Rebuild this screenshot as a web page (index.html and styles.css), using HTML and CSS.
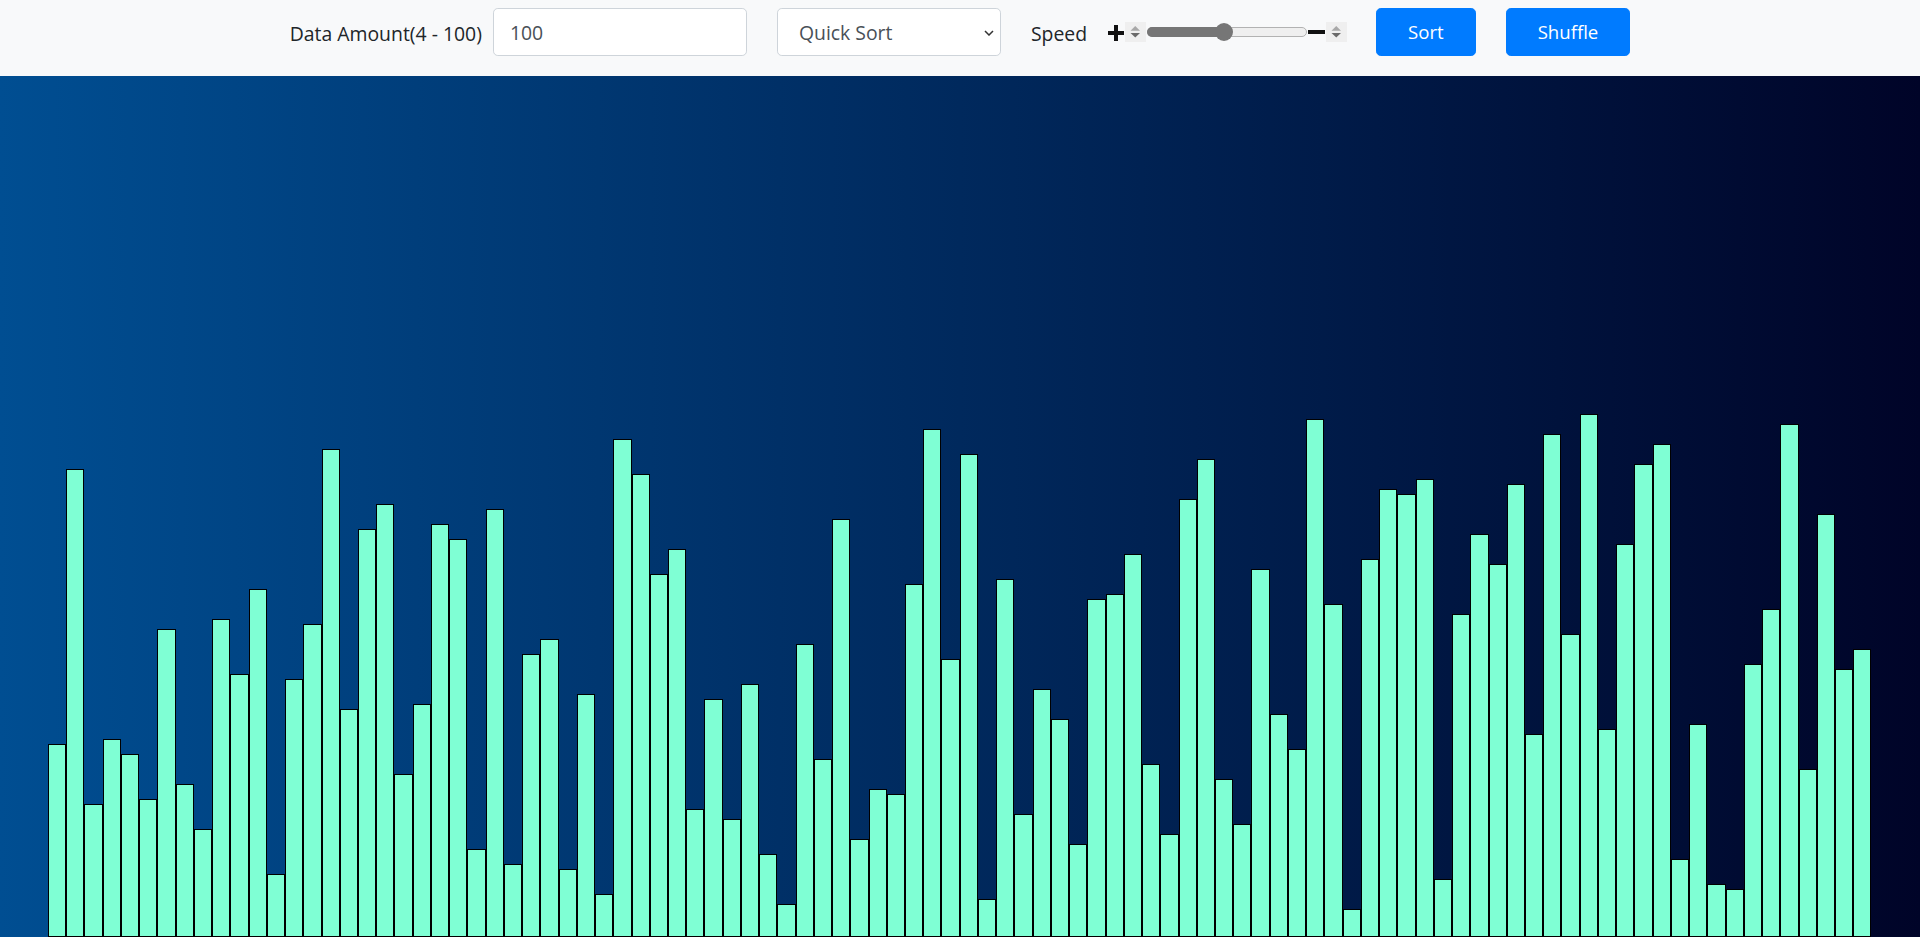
FILE: index.html
```html
<!DOCTYPE html>
<html lang="en">
<head>
<meta charset="utf-8">
<title>Sorting Visualizer</title>
<link rel="stylesheet" href="styles.css">
</head>
<body>
<nav class="toolbar">
  <label class="field-label amount-label" for="amount">Data Amount(4 - 100)</label>
  <input id="amount" class="amount-input" type="text" value="100">
  <div class="select-wrap">
    <select class="algo-select">
      <option>Quick Sort</option>
      <option>Merge Sort</option>
      <option>Heap Sort</option>
      <option>Bubble Sort</option>
    </select>
    <svg class="chevron" width="10" height="6" viewBox="0 0 10 6"><path d="M1 1 L5 5 L9 1" fill="none" stroke="#333" stroke-width="1.5"/></svg>
  </div>
  <span class="field-label speed-label">Speed</span>
  <div class="speed">
    <svg class="plus" width="16" height="16" viewBox="0 0 16 16"><rect x="0" y="6" width="16" height="4" fill="#111"/><rect x="6" y="0" width="4" height="16" fill="#111"/></svg>
    <span class="spinner"><svg width="21" height="20" viewBox="0 0 21 20"><path d="M5.5 8.7 L10.25 4 L15 8.7 Z" fill="#a8a8a8"/><path d="M5.5 11 L15 11 L10.25 15.5 Z" fill="#6a6a6a"/></svg></span>
    <div class="track"><div class="track-fill"></div><div class="thumb"></div></div>
    <svg class="minus" width="17" height="4" viewBox="0 0 17 4"><rect x="0" y="0" width="17" height="4" fill="#111"/></svg>
    <span class="spinner"><svg width="21" height="20" viewBox="0 0 21 20"><path d="M5.5 8.7 L10.25 4 L15 8.7 Z" fill="#a8a8a8"/><path d="M5.5 11 L15 11 L10.25 15.5 Z" fill="#6a6a6a"/></svg></span>
  </div>
  <button class="btn">Sort</button>
  <button class="btn">Shuffle</button>
</nav>
<main class="stage">
  <div class="bars">
    <div class="bar" style="height:193px"></div>
    <div class="bar" style="height:468px"></div>
    <div class="bar" style="height:133px"></div>
    <div class="bar" style="height:198px"></div>
    <div class="bar" style="height:183px"></div>
    <div class="bar" style="height:138px"></div>
    <div class="bar" style="height:308px"></div>
    <div class="bar" style="height:153px"></div>
    <div class="bar" style="height:108px"></div>
    <div class="bar" style="height:318px"></div>
    <div class="bar" style="height:263px"></div>
    <div class="bar" style="height:348px"></div>
    <div class="bar" style="height:63px"></div>
    <div class="bar" style="height:258px"></div>
    <div class="bar" style="height:313px"></div>
    <div class="bar" style="height:488px"></div>
    <div class="bar" style="height:228px"></div>
    <div class="bar" style="height:408px"></div>
    <div class="bar" style="height:433px"></div>
    <div class="bar" style="height:163px"></div>
    <div class="bar" style="height:233px"></div>
    <div class="bar" style="height:413px"></div>
    <div class="bar" style="height:398px"></div>
    <div class="bar" style="height:88px"></div>
    <div class="bar" style="height:428px"></div>
    <div class="bar" style="height:73px"></div>
    <div class="bar" style="height:283px"></div>
    <div class="bar" style="height:298px"></div>
    <div class="bar" style="height:68px"></div>
    <div class="bar" style="height:243px"></div>
    <div class="bar" style="height:43px"></div>
    <div class="bar" style="height:498px"></div>
    <div class="bar" style="height:463px"></div>
    <div class="bar" style="height:363px"></div>
    <div class="bar" style="height:388px"></div>
    <div class="bar" style="height:128px"></div>
    <div class="bar" style="height:238px"></div>
    <div class="bar" style="height:118px"></div>
    <div class="bar" style="height:253px"></div>
    <div class="bar" style="height:83px"></div>
    <div class="bar" style="height:33px"></div>
    <div class="bar" style="height:293px"></div>
    <div class="bar" style="height:178px"></div>
    <div class="bar" style="height:418px"></div>
    <div class="bar" style="height:98px"></div>
    <div class="bar" style="height:148px"></div>
    <div class="bar" style="height:143px"></div>
    <div class="bar" style="height:353px"></div>
    <div class="bar" style="height:508px"></div>
    <div class="bar" style="height:278px"></div>
    <div class="bar" style="height:483px"></div>
    <div class="bar" style="height:38px"></div>
    <div class="bar" style="height:358px"></div>
    <div class="bar" style="height:123px"></div>
    <div class="bar" style="height:248px"></div>
    <div class="bar" style="height:218px"></div>
    <div class="bar" style="height:93px"></div>
    <div class="bar" style="height:338px"></div>
    <div class="bar" style="height:343px"></div>
    <div class="bar" style="height:383px"></div>
    <div class="bar" style="height:173px"></div>
    <div class="bar" style="height:103px"></div>
    <div class="bar" style="height:438px"></div>
    <div class="bar" style="height:478px"></div>
    <div class="bar" style="height:158px"></div>
    <div class="bar" style="height:113px"></div>
    <div class="bar" style="height:368px"></div>
    <div class="bar" style="height:223px"></div>
    <div class="bar" style="height:188px"></div>
    <div class="bar" style="height:518px"></div>
    <div class="bar" style="height:333px"></div>
    <div class="bar" style="height:28px"></div>
    <div class="bar" style="height:378px"></div>
    <div class="bar" style="height:448px"></div>
    <div class="bar" style="height:443px"></div>
    <div class="bar" style="height:458px"></div>
    <div class="bar" style="height:58px"></div>
    <div class="bar" style="height:323px"></div>
    <div class="bar" style="height:403px"></div>
    <div class="bar" style="height:373px"></div>
    <div class="bar" style="height:453px"></div>
    <div class="bar" style="height:203px"></div>
    <div class="bar" style="height:503px"></div>
    <div class="bar" style="height:303px"></div>
    <div class="bar" style="height:523px"></div>
    <div class="bar" style="height:208px"></div>
    <div class="bar" style="height:393px"></div>
    <div class="bar" style="height:473px"></div>
    <div class="bar" style="height:493px"></div>
    <div class="bar" style="height:78px"></div>
    <div class="bar" style="height:213px"></div>
    <div class="bar" style="height:53px"></div>
    <div class="bar" style="height:48px"></div>
    <div class="bar" style="height:273px"></div>
    <div class="bar" style="height:328px"></div>
    <div class="bar" style="height:513px"></div>
    <div class="bar" style="height:168px"></div>
    <div class="bar" style="height:423px"></div>
    <div class="bar" style="height:268px"></div>
    <div class="bar" style="height:288px"></div>
  </div>
</main>
</body>
</html>
```

FILE: styles.css
```css
* {
  box-sizing: border-box;
}

html, body {
  margin: 0;
  padding: 0;
  height: 100%;
  overflow: hidden;
}

body {
  font-family: "Segoe UI", "Open Sans", "Noto Sans", sans-serif;
  color: #212529;
  background: #f8f9fa;
}

.toolbar {
  height: 76px;
  background: #f8f9fa;
  display: flex;
  align-items: flex-start;
  justify-content: center;
  padding-top: 8px;
}

.field-label {
  font-size: 19.4px;
  line-height: 30px;
  margin-top: 11px;
  white-space: nowrap;
}

.amount-label {
  margin-right: 11px;
}

.amount-input {
  width: 254px;
  height: 48px;
  border: 1px solid #ced4da;
  border-radius: 4.8px;
  background: #fff;
  padding: 0 16px;
  font-family: inherit;
  font-size: 19.4px;
  color: #495057;
  outline: none;
}

.select-wrap {
  position: relative;
  margin-left: 30px;
  width: 224px;
  height: 48px;
}

.algo-select {
  appearance: none;
  -webkit-appearance: none;
  width: 100%;
  height: 100%;
  border: 1px solid #ced4da;
  border-radius: 4.8px;
  background: #fff;
  padding: 0 30px 0 21px;
  font-family: inherit;
  font-size: 19.4px;
  color: #495057;
  outline: none;
}

.chevron {
  position: absolute;
  right: 7px;
  top: 22px;
  pointer-events: none;
}

.speed-label {
  margin-left: 30px;
  margin-right: 21px;
}

.speed {
  height: 48px;
  display: flex;
  align-items: center;
}

.plus {
  display: block;
  margin-top: 1px;
}

.spinner {
  display: block;
  width: 21px;
  height: 20px;
  background: #efefef;
  margin-left: 1px;
}

.spinner svg {
  display: block;
}

.track {
  position: relative;
  width: 160px;
  height: 10px;
  margin-left: 1px;
  margin-right: 1px;
  border: 1px solid #b2b2b2;
  border-radius: 5px;
  background: #efefef;
}

.track-fill {
  position: absolute;
  left: -1px;
  top: -1px;
  bottom: -1px;
  width: 80px;
  background: #767676;
  border-radius: 5px 0 0 5px;
}

.thumb {
  position: absolute;
  left: 67px;
  top: -5px;
  width: 18px;
  height: 18px;
  border-radius: 50%;
  background: #767676;
}

.minus {
  display: block;
}

.btn {
  margin-left: 30px;
  height: 48px;
  padding: 0 31px;
  border: 1px solid #007bff;
  border-radius: 4.8px;
  background: #007bff;
  color: #fff;
  font-family: inherit;
  font-size: 18.6px;
  line-height: 1;
  cursor: pointer;
}

.speed + .btn {
  margin-left: 29px;
}

.stage {
  height: calc(100vh - 76px);
  background: linear-gradient(to right, #004e92, #000428);
  overflow: hidden;
}

.bars {
  width: 95%;
  height: 100%;
  margin: 0 auto;
  display: flex;
  align-items: flex-end;
}

.bar {
  flex: 1 1 0;
  border: 1px solid #000;
  background: #7fffd4;
}
```
